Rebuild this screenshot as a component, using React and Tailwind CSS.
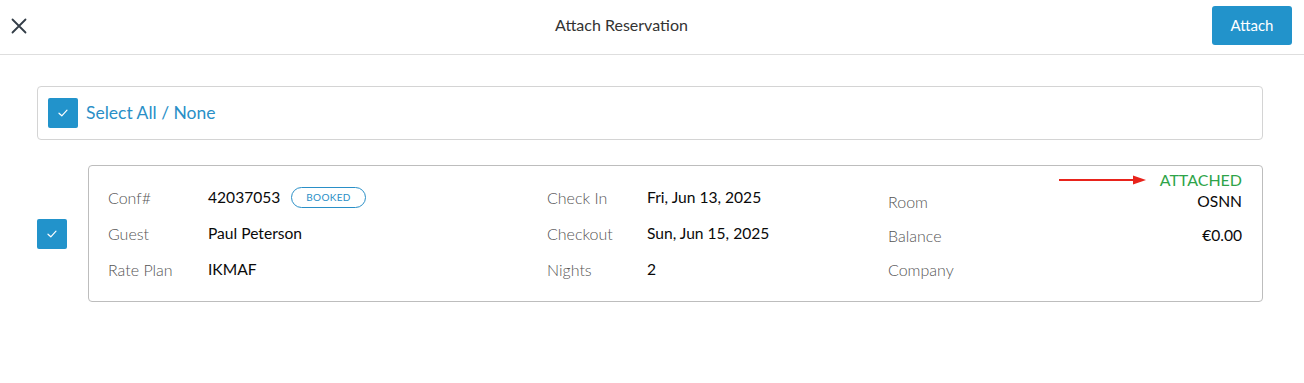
import React from "react";

function Check() {
  return (
    <svg width="10" height="8" viewBox="0 0 10 8" fill="none">
      <polyline points="1,4.2 3.8,6.8 9,1.2" stroke="white" strokeWidth="1.2" strokeLinecap="round" strokeLinejoin="round" />
    </svg>
  );
}

function Box() {
  return (
    <div className="w-[30px] h-[30px] bg-[#2293cb] rounded-[2px] flex items-center justify-center shrink-0">
      <Check />
    </div>
  );
}

function Row({ label, children, h = "h-[36px]" }) {
  return (
    <div className={`flex items-center ${h}`}>
      <div className="w-[100px] text-[#555] font-light">{label}</div>
      <div className="text-[#0a0a0a] text-[15.6px] font-normal flex items-center">{children}</div>
    </div>
  );
}

export default function App() {
  return (
    <div className="w-[1304px] h-[383px] bg-white text-[16px]" style={{ fontFamily: "Lato, 'Open Sans', sans-serif" }}>
      <div className="h-[55px] border-b border-[#dedede] flex items-center justify-between pl-[12px] pr-[12px] pb-[4px]">
        <svg width="16" height="16" viewBox="0 0 16 16" className="ml-[-1px] mt-[2px]">
          <path d="M1.5 1.5 L14.5 14.5 M14.5 1.5 L1.5 14.5" stroke="#333d47" strokeWidth="1.8" strokeLinecap="round" />
        </svg>
        <div className="text-[#333] text-[16px] ml-[4px]">Attach Reservation</div>
        <button className="w-[80px] h-[39px] bg-[#2293cb] rounded-[3px] text-white text-[15px]">Attach</button>
      </div>

      <div className="pl-[37px] pt-[31px] w-[1263px]">
        <div className="h-[54px] border border-[#d4d4d4] rounded-[4px] flex items-center pl-[10px] gap-[8px]">
          <Box />
          <span className="text-[17.5px] text-[#2a8fc7] mt-[1px]">Select All / None</span>
        </div>

        <div className="flex items-center mt-[25px]">
          <div className="w-[51px] flex">
            <Box />
          </div>
          <div className="relative flex-1 border border-[#bdbdbd] rounded-[4px] pl-[19px] pr-[20px] pt-[14px] pb-[13px] flex">
            <div className="w-[439px]">
              <Row label="Conf#">
                42037053
                <span className="ml-[11px] h-[21px] px-[14px] rounded-full border border-[#2a8fc7] text-[#2a8fc7] text-[10px] font-normal flex items-center tracking-[0.3px]">BOOKED</span>
              </Row>
              <Row label="Guest">Paul Peterson</Row>
              <Row label="Rate Plan">IKMAF</Row>
            </div>
            <div className="w-[341px]">
              <Row label="Check In">Fri, Jun 13, 2025</Row>
              <Row label="Checkout">Sun, Jun 15, 2025</Row>
              <Row label="Nights">2</Row>
            </div>
            <div className="flex-1 pt-[5px]">
              {[
                ["Room", "OSNN"],
                ["Balance", "€0.00"],
                ["Company", ""],
              ].map(([l, v]) => (
                <div key={l} className="flex items-center justify-between h-[34px]">
                  <span className="text-[#555] font-light">{l}</span>
                  <span className="text-[#0a0a0a] text-[15.6px] font-normal">{v}</span>
                </div>
              ))}
            </div>
            <div className="absolute right-[20px] top-[2px] flex items-center gap-[13px]">
              <svg width="88" height="10" viewBox="0 0 88 10">
                <line x1="0" y1="5" x2="76" y2="5" stroke="#e8231b" strokeWidth="2.2" />
                <polygon points="74,0.5 87,5 74,9.5" fill="#e8231b" />
              </svg>
              <span className="text-[#2ea449] text-[16px]">ATTACHED</span>
            </div>
          </div>
        </div>
      </div>
    </div>
  );
}
